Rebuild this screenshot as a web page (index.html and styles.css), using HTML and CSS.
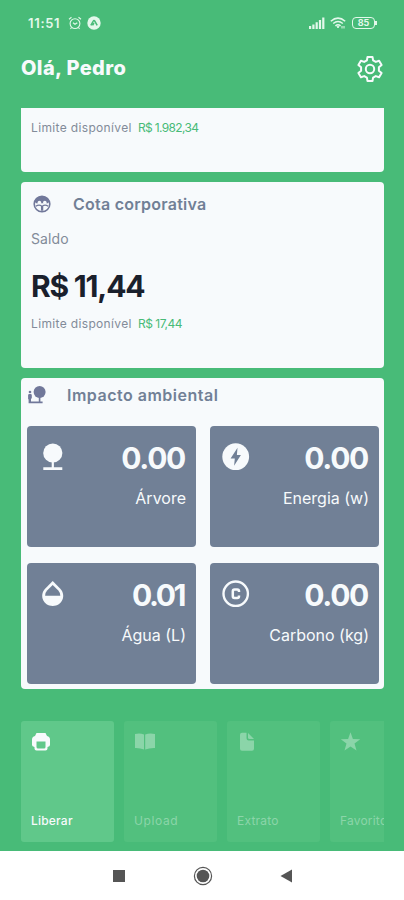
FILE: index.html
```html
<!DOCTYPE html>
<html lang="pt-BR">
<head>
    <meta charset="UTF-8">
    <meta name="viewport" content="width=device-width, initial-scale=1.0">
    <title>Impressões</title>
    <link rel="stylesheet" href="styles.css">
</head>
<body>
    <div class="app">
        <!-- Status bar -->
        <div class="status">
            <span class="clock">11:51</span>
            <svg width="14" height="14" viewBox="0 0 14 14" fill="none" stroke="currentColor" stroke-width="1.1">
                <circle cx="7" cy="7.6" r="4.9"/>
                <path d="M1 3.2 3.5 1.2M13 3.2 10.5 1.2M5 6.7l2 1.6 2.3-1.6M3.5 11.5l-1 1.3M10.5 11.5l1 1.3"/>
            </svg>
            <svg class="app-badge" width="14" height="14" viewBox="0 0 14 14">
                <circle cx="7" cy="7" r="6.7" fill="currentColor"/>
                <path d="M3.8 9.4 6.3 5q.7-1.2 1.4 0l2.5 4.4M5.5 9.4 7 7" fill="none" stroke="#48bb78" stroke-width="1.5"/>
            </svg>
            <svg class="signal" width="16" height="12" viewBox="0 0 16 12" fill="currentColor">
                <path d="M0 9h2.2v3H0zM3.3 7.5h2.2V12H3.3zM6.6 5.3h2.2V12H6.6zM9.9 3h2.2v9H9.9zM13.2.5h2.2V12h-2.2z"/>
            </svg>
            <svg class="wifi" width="16" height="12" viewBox="0 0 16 12" fill="none" stroke="currentColor" stroke-width="1.5">
                <path d="M.8 4.2Q8-2 15.2 4.2M3.2 6.5Q8 2.6 12.8 6.5M5.4 8.8Q8 6.8 10.6 8.8"/>
                <path d="M7 9.3h2L8 11zM12 9v2.5M14 9v2.5" stroke-width="1"/>
            </svg>
            <span class="battery">85</span>
        </div>

        <header class="header">
            <h1>Olá, Pedro</h1>
            <svg width="28" height="28" viewBox="0 0 28 28" fill="none" stroke="currentColor" stroke-width="2" stroke-linejoin="round">
                <path d="M11.5 2h5l.6 3.4 2.7 1.5 3.3-1.2 2.5 4.3-2.7 2.3v3.4l2.7 2.3-2.5 4.3-3.3-1.2-2.7 1.5-.6 3.4h-5l-.6-3.4-2.7-1.5-3.3 1.2L2.4 18l2.7-2.3v-3.4L2.4 10l2.5-4.3 3.3 1.2 2.7-1.5z"/>
                <circle cx="14" cy="14" r="4.2"/>
            </svg>
        </header>

        <main class="cards">
            <section class="card card-cut">
                <p class="limit"><span class="limit-label">Limite disponível</span><span class="green total">R$ 1.982,34</span></p>
            </section>

            <section class="card card-quota">
                <div class="card-title">
                    <svg width="18" height="18" viewBox="0 0 18 18">
                        <circle cx="9" cy="9" r="7.8" fill="none" stroke="currentColor" stroke-width="1.6"/>
                        <path d="M1.8 6.5Q4 1.2 9 1.2t7.2 5.3L15 8.3H3z" fill="currentColor"/>
                        <circle cx="6.4" cy="7.5" r="1.8" fill="#f7fafc"/>
                        <circle cx="11.8" cy="7.5" r="1.8" fill="#f7fafc"/>
                        <path d="M2.8 11.2Q6 9.3 8.6 11v4.7M15.2 11.2Q12 9.3 9.6 11v4.7" fill="none" stroke="currentColor" stroke-width="1.3"/>
                    </svg>
                    <h2>Cota corporativa</h2>
                </div>
                <p class="saldo">Saldo</p>
                <p class="amount">R$ 11,44</p>
                <p class="limit"><span class="limit-label">Limite disponível</span><span class="green">R$ 17,44</span></p>
            </section>

            <section class="card card-impact">
                <div class="card-title">
                    <svg width="18" height="18" viewBox="0 0 18 18" fill="currentColor">
                        <circle cx="12.6" cy="6" r="6"/>
                        <path d="M11.8 11h1.6v4.6h2.2v1.6H1.6v-4h-.5V9.3Q1.100 8 2.300 8h1.200q1.300 0 1.300 1.300v3.200H4v3.100h7.800z"/>
                        <circle cx="3" cy="6" r="1.3"/>
                    </svg>
                    <h2>Impacto ambiental</h2>
                </div>
                <div class="tiles">
                    <div class="tile">
                        <svg width="28" height="28" viewBox="0 0 28 28" fill="currentColor">
                            <circle cx="13.800" cy="10" r="9.600"/>
                            <path d="M12.700 19h2.200v5.300h8.400V27h-19v-2.700h8.400z"/>
                        </svg>
                        <strong>0.00</strong>
                        <span>Árvore</span>
                    </div>
                    <div class="tile">
                        <svg width="28" height="28" viewBox="0 0 28 28">
                            <circle cx="13.700" cy="13.700" r="13.400" fill="currentColor"/>
                            <path d="M15.500 4.700 8.600 15.500h4.200L12.100 22.700l6.800-10.800h-4z" fill="#718096"/>
                        </svg>
                        <strong>0.00</strong>
                        <span>Energia (w)</span>
                    </div>
                    <div class="tile">
                        <svg width="28" height="28" viewBox="0 0 28 28">
                            <path d="M13.700 1 21.300 8.800C27.500 15.300 23.200 26 13.700 26S-.1 15.300 6.100 8.800z" fill="currentColor"/>
                            <path d="M13.700 5 19.300 10.600Q21.300 12.800 21.300 15.700H6.100Q6.100 12.800 8.100 10.600z" fill="#718096"/>
                        </svg>
                        <strong class="narrow">0.01</strong>
                        <span>Água (L)</span>
                    </div>
                    <div class="tile">
                        <svg width="28" height="28" viewBox="0 0 28 28" fill="none" stroke="currentColor">
                            <circle cx="13.700" cy="13.700" r="12.200" stroke-width="2.400"/>
                            <path d="M17 12v-.8q0-1.700-1.700-1.700h-2.800q-1.700 0-1.700 1.700v5q0 1.700 1.700 1.700h2.800q1.700 0 1.700-1.700v-.8" stroke-width="2.500"/>
                        </svg>
                        <strong>0.00</strong>
                        <span>Carbono (kg)</span>
                    </div>
                </div>
            </section>
        </main>

        <nav class="actions">
            <div class="action active">
                <svg width="20" height="20" viewBox="0 0 20 20" fill="currentColor">
                    <path d="M5.500 1h9l1.500 3q3 .5 3 3.500V13q0 1.500-2.500 2v1.500q0 2-2 2h-9q-2 0-2-2V15Q1 14.500 1 13V7.500Q1 4.500 4 4z"/>
                    <path d="M5.500 9.500h9v5.500q0 1.500-1.500 1.500H7q-1.500 0-1.500-1.500z" fill="#60c88a"/>
                </svg>
                <span>Liberar</span>
            </div>
            <div class="action">
                <svg width="20" height="20" viewBox="0 0 20 20" fill="currentColor">
                    <path d="M1 2Q6 .8 10 2.500v15Q6 15.800 1 16zM21 2q-5.500-1.200-9.800.5v15Q15.500 15.800 21 16z"/>
                </svg>
                <span class="upload">Upload</span>
            </div>
            <div class="action">
                <svg width="20" height="20" viewBox="0 0 20 20" fill="currentColor">
                    <path d="M5 .8h4.500v5.500q0 2.200 2.200 2.200H17v8.300q0 2-2 2H5q-2 0-2-2v-14q0-2 2-2z"/>
                    <path d="M11 1v4.500q0 1.500 1.500 1.500H17z"/>
                </svg>
                <span>Extrato</span>
            </div>
            <div class="action">
                <svg width="20" height="20" viewBox="0 0 20 20" fill="currentColor">
                    <path d="m10.500 .3 2.400 6.600 7.300.3-5.700 4.400 2 7-6-4-6 4 2-7L.8 7.200l7.300-.3z"/>
                </svg>
                <span>Favoritos</span>
            </div>
        </nav>

        <!-- Android buttons -->
        <footer class="system">
            <svg width="20" height="20" viewBox="0 0 20 20"><path d="M4 4h12v12H4z"/></svg>
            <svg width="20" height="20" viewBox="0 0 20 20"><circle cx="10" cy="10" r="8.600" fill="none" stroke="#555" stroke-width="1.200"/><circle cx="10" cy="10" r="6.300"/></svg>
            <svg width="20" height="20" viewBox="0 0 20 20"><path d="M15 3.500v13L3.500 10z"/></svg>
        </footer>
    </div>
</body>
</html>
```
FILE: styles.css
```css
* {
    box-sizing: border-box;
}
body {
    margin: 0;
    font-family: Inter, "Open Sans", sans-serif;
    color: #f7fafc;
    background-color: #48bb78;
}
h1, h2, p {
    margin: 0;
}
svg {
    display: block;
    flex-shrink: 0;
    overflow: visible;
}
.app {
    height: 900px;
    overflow: hidden;
    display: flex;
    flex-direction: column;
}
.status {
    height: 46px;
    flex-shrink: 0;
    padding: 0 29px 0 28px;
    display: flex;
    align-items: center;
    color: #e3f8eb;
}
.clock {
    width: 40px;
    font-size: 13px;
    font-weight: 600;
    letter-spacing: 0.7px;
}
.app-badge {
    margin-left: 5px;
}
.signal {
    margin-left: auto;
}
.wifi {
    margin: 0 6px 0 5px;
}
.battery {
    position: relative;
    width: 23px;
    height: 12px;
    border: 1.5px solid currentColor;
    border-radius: 4px;
    font-size: 9px;
    font-weight: 700;
    line-height: 10px;
    text-align: center;
}
.battery::after {
    content: "";
    position: absolute;
    right: -3px;
    top: 3px;
    width: 2px;
    height: 4px;
    background: currentColor;
}
.header {
    height: 62px;
    flex-shrink: 0;
    padding: 9px 20px 0 21px;
    display: flex;
    justify-content: space-between;
}
.header h1 {
    font-size: 20px;
    line-height: 26px;
    font-weight: 800;
    letter-spacing: 0.4px;
}
.cards {
    height: 581px;
    flex-shrink: 0;
    padding: 0 20px 0 21px;
    display: flex;
    flex-direction: column;
    gap: 10px;
}
.card {
    background: #f7fafc;
    border-radius: 4px;
    color: #718096;
}
.card-cut {
    height: 64px;
    padding: 12px 10px;
    border-radius: 0 0 4px 4px;
}
.card-quota {
    height: 186px;
    padding: 12px 11px 0 10px;
}
.card-impact {
    height: 311px;
    padding: 7px 5px 5px 6px;
}
.card-title {
    display: flex;
    align-items: center;
    height: 20px;
    gap: 22px;
}
.card-title svg {
    color: #71789a;
}
.card-quota .card-title {
    padding-left: 2px;
}
.card-title h2 {
    font-size: 16px;
    line-height: 20px;
    font-weight: 600;
    letter-spacing: 0.25px;
}
.card-impact h2 {
    letter-spacing: 0.5px;
}
.limit {
    display: flex;
    font-size: 12px;
    line-height: 16px;
    color: #828b99;
}
.limit-label {
    width: 107px;
    letter-spacing: 0.35px;
}
.green {
    color: #48bb78;
    letter-spacing: -0.5px;
}
.total {
    letter-spacing: -0.65px;
}
.saldo {
    margin-top: 16px;
    font-size: 14px;
    line-height: 18px;
    letter-spacing: 0.1px;
    color: #828b99;
}
.amount {
    height: 40px;
    margin: 18px 0 10px;
    font-size: 30px;
    line-height: 40px;
    font-weight: 700;
    letter-spacing: -1.2px;
    color: #1a202c;
}
.tiles {
    margin-top: 21px;
    display: grid;
    grid-template-columns: 1fr 1fr;
    grid-auto-rows: 121px;
    gap: 16px 14px;
}
.tile {
    display: grid;
    grid-template-columns: 28px 1fr;
    grid-template-rows: 37px 24px;
    row-gap: 9px;
    padding: 14px 10px 0 12px;
    border-radius: 4px;
    background: #718096;
    color: #f7fafc;
    text-align: right;
}
.tile svg {
    margin-top: 3px;
}
.tile strong {
    margin-right: 1px;
    font-size: 30px;
    line-height: 37px;
    font-weight: 700;
    letter-spacing: -1.3px;
}
.tile .narrow {
    letter-spacing: -2.4px;
    margin-right: 2px;
}
.tile span {
    grid-column: 1 / 3;
    font-size: 16px;
    line-height: 24px;
}
.actions {
    height: 162px;
    flex-shrink: 0;
    margin-right: 20px;
    padding: 32px 0 0 21px;
    display: flex;
    gap: 10px;
    overflow: hidden;
}
.action {
    width: 93px;
    height: 121px;
    flex-shrink: 0;
    padding: 11px 10px;
    display: flex;
    flex-direction: column;
    justify-content: space-between;
    border-radius: 3px;
    background: #52c07e;
    color: #8bd5a9;
    font-size: 12px;
    line-height: 20px;
    letter-spacing: 0.2px;
}
.upload {
    letter-spacing: 0.6px;
}
.action.active {
    background: #60c88a;
    color: #f7fafc;
    font-weight: 500;
}
.system {
    height: 49px;
    flex-shrink: 0;
    padding-left: 2px;
    display: flex;
    align-items: center;
    justify-content: center;
    gap: 64px;
    background: #fff;
    fill: #555;
}
```
